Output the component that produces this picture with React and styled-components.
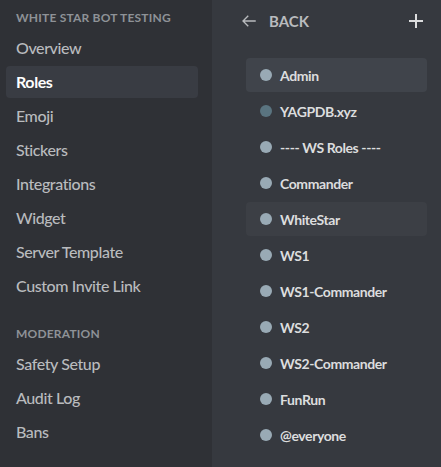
import React from "react";
import styled, { createGlobalStyle } from "styled-components";

const Global = createGlobalStyle`
  html, body { margin: 0; padding: 0; background: #36393f; }
  body { font-family: Lato, "Noto Sans", sans-serif; }
  * { box-sizing: border-box; }
`;

const Page = styled.div`
  display: flex;
  width: 441px;
  height: 467px;
  overflow: hidden;
`;

const Sidebar = styled.nav`
  width: 212px;
  flex: none;
  background: #2f3136;
  padding: 10px 14px 0 6px;
  display: flex;
  flex-direction: column;
`;

const SectionTitle = styled.div`
  font-size: 12px;
  font-weight: 700;
  text-transform: uppercase;
  color: #8e9297;
  padding: 0 10px;
  height: 16px;
  line-height: 16px;
  margin-bottom: 6px;
  letter-spacing: 0.2px;
`;

const NavItem = styled.div`
  height: 32px;
  line-height: 32px;
  padding: 0 10px;
  margin-bottom: 2px;
  border-radius: 4px;
  font-size: 16px;
  font-weight: ${(p) => (p.$active ? 700 : 500)};
  letter-spacing: -0.4px;
  color: ${(p) => (p.$active ? "#ffffff" : "#b9bbbe")};
  background: ${(p) => (p.$active ? "#393c43" : "transparent")};
  white-space: nowrap;
`;

const Divider = styled.div`
  height: 1px;
  background: #3f4147;
  margin: 8px 10px 14px;
`;

const Main = styled.main`
  flex: 1;
  background: #36393f;
  padding: 10px 14px 0 28px;
  display: flex;
  flex-direction: column;
`;

const TopBar = styled.div`
  display: flex;
  align-items: center;
  height: 22px;
  margin-bottom: 26px;
`;

const BackButton = styled.div`
  display: flex;
  align-items: center;
  gap: 11px;
  color: #b9bbbe;
  font-size: 15px;
  font-weight: 700;
  flex: 1;
`;

const IconButton = styled.div`
  display: flex;
  color: #dcddde;
  margin-right: 3px;
`;

const RoleList = styled.div`
  display: flex;
  flex-direction: column;
  gap: 2px;
  padding-left: 6px;
`;

const RoleRow = styled.div`
  display: flex;
  align-items: center;
  gap: 8px;
  height: 34px;
  padding: 0 14px;
  border-radius: 4px;
  background: ${(p) => p.$bg || "transparent"};
  font-size: 14px;
  font-weight: 700;
  letter-spacing: -0.4px;
  color: #dcddde;
`;

const Dot = styled.span`
  width: 12px;
  height: 12px;
  border-radius: 50%;
  background: ${(p) => p.$color};
  flex: none;
`;

const settings = [
  "Overview",
  "Roles",
  "Emoji",
  "Stickers",
  "Integrations",
  "Widget",
  "Server Template",
  "Custom Invite Link",
];

const moderation = ["Safety Setup", "Audit Log", "Bans"];

const roles = [
  { name: "Admin", bg: "#40444b" },
  { name: "YAGPDB.xyz", color: "#5a7480" },
  { name: "---- WS Roles ----" },
  { name: "Commander" },
  { name: "WhiteStar", bg: "#3c3f45" },
  { name: "WS1" },
  { name: "WS1-Commander" },
  { name: "WS2" },
  { name: "WS2-Commander" },
  { name: "FunRun" },
  { name: "@everyone" },
];

export default function App() {
  return (
    <Page>
      <Global />
      <Sidebar>
        <SectionTitle>White Star Bot Testing</SectionTitle>
        {settings.map((s) => (
          <NavItem key={s} $active={s === "Roles"}>
            {s}
          </NavItem>
        ))}
        <Divider />
        <SectionTitle>Moderation</SectionTitle>
        {moderation.map((s) => (
          <NavItem key={s}>{s}</NavItem>
        ))}
        <Divider />
      </Sidebar>
      <Main>
        <TopBar>
          <BackButton>
            <svg width="18" height="18" viewBox="0 0 24 24" fill="none">
              <path
                d="M21 12H4M11 5l-7 7 7 7"
                stroke="currentColor"
                strokeWidth="1.8"
              />
            </svg>
            BACK
          </BackButton>
          <IconButton>
            <svg width="16" height="16" viewBox="0 0 16 16">
              <path d="M8 1v14M1 8h14" stroke="currentColor" strokeWidth="2" />
            </svg>
          </IconButton>
        </TopBar>
        <RoleList>
          {roles.map((r) => (
            <RoleRow key={r.name} $bg={r.bg}>
              <Dot $color={r.color || "#99aab5"} />
              {r.name}
            </RoleRow>
          ))}
        </RoleList>
      </Main>
    </Page>
  );
}
